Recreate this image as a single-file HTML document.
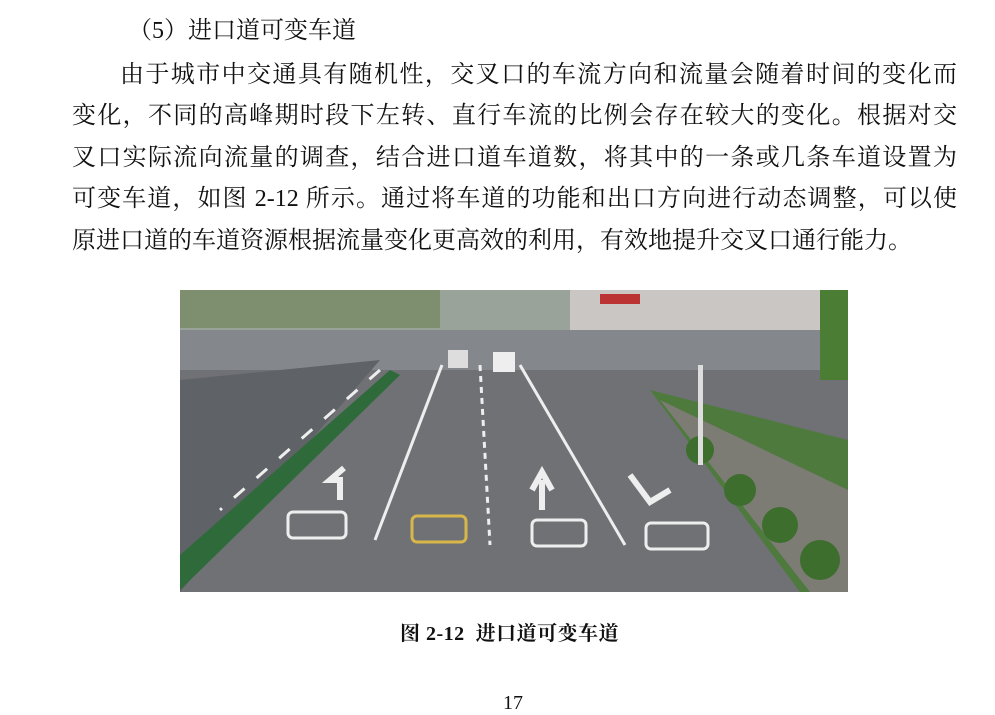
<!DOCTYPE html>
<html><head><meta charset="utf-8"><style>
body{margin:0;width:995px;height:702px;background:#fff;overflow:hidden;position:relative;font-family:"Liberation Serif","Noto Serif CJK SC","Noto Sans CJK SC",serif;color:#111}
.l{position:absolute;left:72px;width:885px;font-size:24px;line-height:30px;white-space:nowrap;text-align:justify;text-align-last:justify}
.cap{position:absolute;left:400px;top:617px;font-size:20px;white-space:nowrap;font-weight:bold;letter-spacing:0.5px}
.pn{position:absolute;left:503px;top:692px;font-size:20px}
</style></head><body>
<div class="l" style="top:16px;left:128px;width:auto;text-align:left;text-align-last:left">（5）进口道可变车道</div>
<div class="l" style="top:60px;left:120px;width:837px">由于城市中交通具有随机性，交叉口的车流方向和流量会随着时间的变化而</div>
<div class="l" style="top:101px">变化，不同的高峰期时段下左转、直行车流的比例会存在较大的变化。根据对交</div>
<div class="l" style="top:143px">叉口实际流向流量的调查，结合进口道车道数，将其中的一条或几条车道设置为</div>
<div class="l" style="top:184px">可变车道，如图 2-12 所示。通过将车道的功能和出口方向进行动态调整，可以使</div>
<div class="l" style="top:226px;width:auto;text-align:left;text-align-last:left">原进口道的车道资源根据流量变化更高效的利用，有效地提升交叉口通行能力。</div>
<svg style="position:absolute;left:180px;top:290px" width="668" height="302" viewBox="0 0 668 302">
<rect width="668" height="302" fill="#6f7175"/>
<rect width="668" height="40" fill="#9aa39a"/>
<rect x="0" y="0" width="260" height="38" fill="#7d8f6e"/>
<rect x="390" y="0" width="278" height="45" fill="#c9c6c4"/>
<rect x="420" y="4" width="40" height="10" fill="#b33"/>
<rect x="0" y="40" width="668" height="40" fill="#84878b"/>
<polygon points="0,90 200,70 0,302" fill="#5f6266"/>
<polygon points="0,300 0,265 210,80 220,85" fill="#2f6b3a"/>
<polygon points="470,100 668,150 668,302 620,302" fill="#4f7a3e"/>
<polygon points="480,110 668,200 668,302 630,302" fill="#7c7b74"/>
<circle cx="520" cy="160" r="14" fill="#3d6e2e"/><circle cx="560" cy="200" r="16" fill="#3d6e2e"/><circle cx="600" cy="235" r="18" fill="#3d6e2e"/><circle cx="640" cy="270" r="20" fill="#3d6e2e"/>
<rect x="640" y="0" width="28" height="90" fill="#4b7d35"/>
<g stroke="#eee" stroke-width="3" fill="none">
<line x1="262" y1="75" x2="195" y2="250"/>
<line x1="300" y1="75" x2="310" y2="255" stroke-dasharray="6 5"/>
<line x1="340" y1="75" x2="445" y2="255"/>
<line x1="200" y1="80" x2="40" y2="220" stroke-dasharray="14 16"/>
</g>
<rect x="108" y="222" width="58" height="26" rx="5" fill="none" stroke="#eee" stroke-width="3"/>
<rect x="232" y="226" width="54" height="26" rx="5" fill="none" stroke="#d9b64a" stroke-width="3"/>
<rect x="352" y="230" width="54" height="26" rx="5" fill="none" stroke="#eee" stroke-width="3"/>
<rect x="466" y="233" width="62" height="26" rx="5" fill="none" stroke="#eee" stroke-width="3"/>
<path d="M160 210 L160 190 L150 190 L164 178" stroke="#eee" stroke-width="6" fill="none"/>
<path d="M362 220 L362 190 M352 200 L362 182 L372 200" stroke="#eee" stroke-width="6" fill="none"/>
<path d="M450 185 L470 212 L490 200" stroke="#eee" stroke-width="6" fill="none"/>
<rect x="268" y="60" width="20" height="18" fill="#ddd"/><rect x="313" y="62" width="22" height="20" fill="#eee"/>
<rect x="518" y="75" width="5" height="100" fill="#ddd"/>
</svg>
<div class="cap">图 2-12&nbsp; 进口道可变车道</div>
<div class="pn">17</div>
</body></html>
